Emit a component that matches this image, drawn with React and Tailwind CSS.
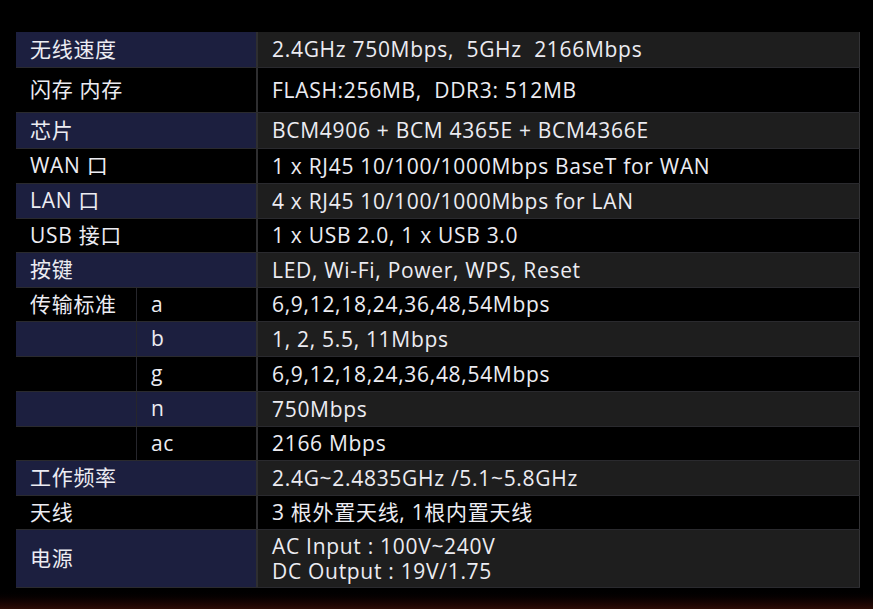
const ROWS = [
  { label: '无线速度', value: ['2.4GHz 750Mbps,  5GHz  2166Mbps'], h: 'h-[36px]' },
  { label: '闪存 内存', value: ['FLASH:256MB,  DDR3: 512MB'], h: 'h-[45px]' },
  { label: '芯片', value: ['BCM4906 + BCM 4365E + BCM4366E'], h: 'h-[36px]' },
  { label: 'WAN 口', value: ['1 x RJ45 10/100/1000Mbps BaseT for WAN'], h: 'h-[35px]' },
  { label: 'LAN 口', value: ['4 x RJ45 10/100/1000Mbps for LAN'], h: 'h-[35px]' },
  { label: 'USB 接口', value: ['1 x USB 2.0, 1 x USB 3.0'], h: 'h-[34px]' },
  { label: '按键', value: ['LED, Wi-Fi, Power, WPS, Reset'], h: 'h-[35px]' },
  { label: '传输标准', sub: 'a', value: ['6,9,12,18,24,36,48,54Mbps'], h: 'h-[34px]' },
  { label: '', sub: 'b', value: ['1, 2, 5.5, 11Mbps'], h: 'h-[35px]' },
  { label: '', sub: 'g', value: ['6,9,12,18,24,36,48,54Mbps'], h: 'h-[35px]' },
  { label: '', sub: 'n', value: ['750Mbps'], h: 'h-[35px]' },
  { label: '', sub: 'ac', value: ['2166 Mbps'], h: 'h-[34px]' },
  { label: '工作频率', value: ['2.4G~2.4835GHz /5.1~5.8GHz'], h: 'h-[35px]' },
  { label: '天线', value: ['3 根外置天线, 1根内置天线'], h: 'h-[34px]' },
  { label: '电源', value: ['AC Input : 100V~240V', 'DC Output : 19V/1.75'], h: 'h-[58px]' },
];

function SpecRow({ row, shaded }) {
  const labelBg = shaded ? 'bg-[#1c1f3f]' : 'bg-black';
  const valueBg = shaded ? 'bg-[#1e1e1e]' : 'bg-black';
  const hasSub = row.sub !== undefined;

  return (
    <div className={`flex ${row.h} border-b border-[#2a2a2e]`}>
      <div className={`flex w-[240px] shrink-0 items-center ${labelBg}`}>
        {hasSub ? (
          <>
            <span className="flex h-full w-[121px] items-center border-r border-[#26262c] pl-[14px]">{row.label}</span>
            <span className="pl-[14px]">{row.sub}</span>
          </>
        ) : (
          <span className="pl-[14px]">{row.label}</span>
        )}
      </div>
      <div className="w-[2px] shrink-0 bg-[#2e2e30]" />
      <div className={`flex flex-1 items-center pl-[14px] leading-[25px] ${valueBg}`}>
        <p className="whitespace-pre">
          {row.value.map((line, i) => (
            <span key={line}>
              {i > 0 && <br />}
              {line}
            </span>
          ))}
        </p>
      </div>
      <div className="w-[1px] shrink-0 bg-[#333336]" />
    </div>
  );
}

export default function App() {
  return (
    <div className="flex h-[609px] w-[873px] flex-col bg-black font-['Open_Sans','Noto_Sans_CJK_SC',sans-serif] text-[21px] tracking-[0.7px] text-[#ececf2]">
      <div className="h-[32px] shrink-0" />
      <div className="ml-[16px] mr-[13px] flex flex-col">
        {ROWS.map((row, i) => (
          <SpecRow key={i} row={row} shaded={i % 2 === 0} />
        ))}
      </div>
      <div className="flex-1 bg-gradient-to-b from-black to-[#2c0c06]" />
    </div>
  );
}
